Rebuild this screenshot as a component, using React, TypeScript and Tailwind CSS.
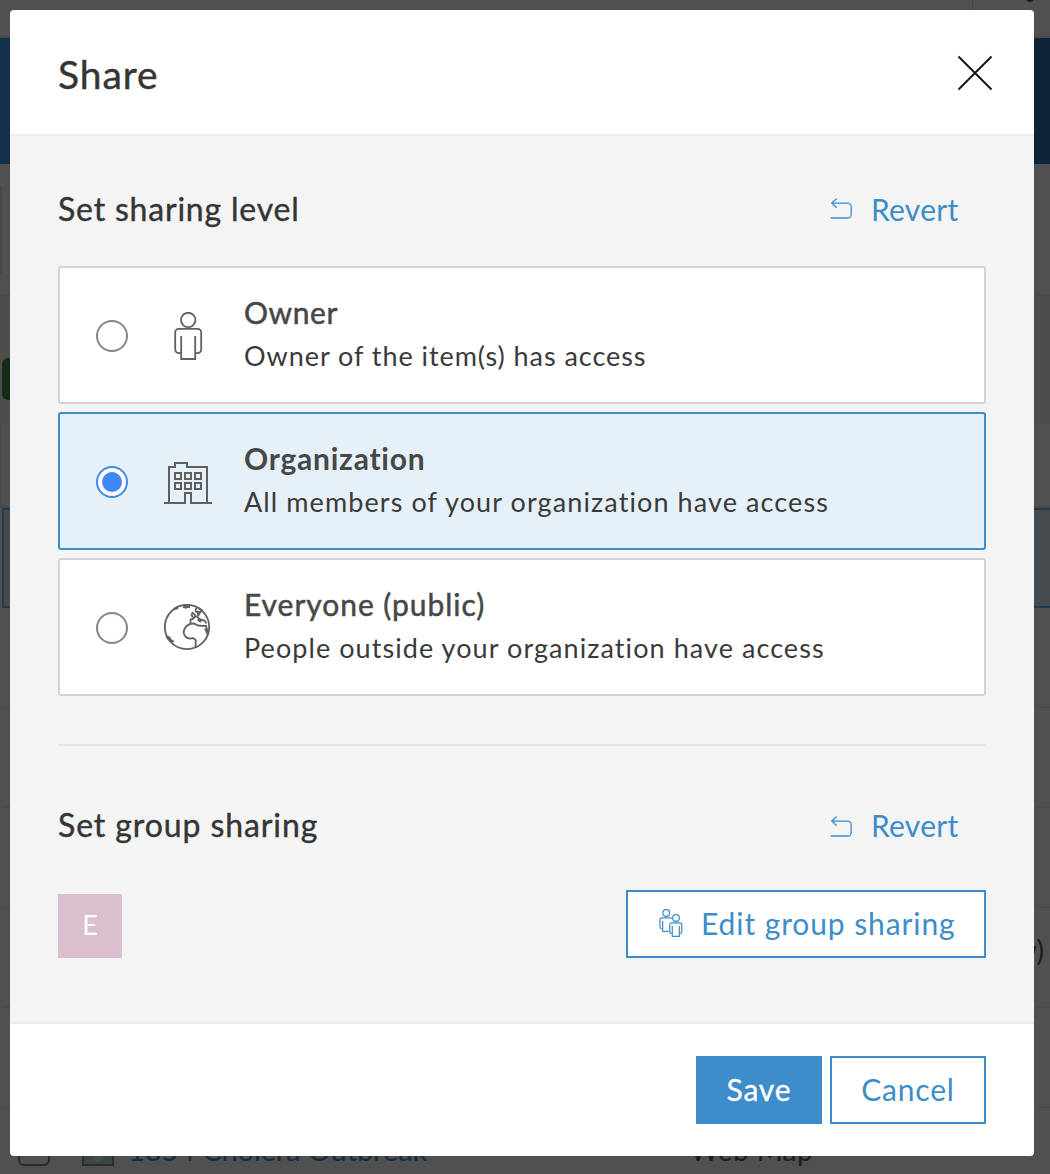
import React from "react";

const rowLabels = ["a", "b", "c", "d", "e"];

function Backdrop() {
  return (
    <div aria-hidden className="absolute inset-0 flex flex-col overflow-hidden bg-[#505050]">
      <div className="flex h-[38px] shrink-0 justify-end border-b-2 border-[#494949]">
        <div className="flex h-full w-[78px] justify-center border-l border-[#454545] pl-9">
          <div className="-mt-1.5 h-2 w-2 rounded-full bg-[#1a1a1a]" />
        </div>
      </div>
      <div className="h-[126px] shrink-0 bg-linear-to-r from-[#12304a] to-[#0c2338]" />
      <div className="flex h-[132px] shrink-0 items-start border-b-2 border-[#4a4a4a] pt-[22px]">
        <div className="h-[88px] w-0.5 bg-[#474747]" />
      </div>
      <div className="h-[128px] shrink-0 bg-[#4d4d4d] pt-[62px] pl-0.5">
        <div className="h-[42px] w-24 rounded-md bg-[#172a16]" />
      </div>
      <div className="h-[84px] shrink-0 border-b-2 border-l-2 border-[#4a4a4a]" />
      <div className="ml-0.5 h-[100px] shrink-0 border-2 border-r-0 border-[#203a50] bg-[#454a4f]" />
      {rowLabels.map((id) => (
        <div
          key={id}
          className="ml-0.5 flex h-[100px] shrink-0 items-center justify-end border-b-2 border-[#4b4b4b] pr-1.5 pb-3.5 text-[28px] text-[#1c1c1c]"
        >
          {id === "d" && <span>(view)</span>}
        </div>
      ))}
      <div className="flex h-[66px] shrink-0 items-start pt-[26px] pl-[18px] leading-8">
        <div className="h-8 w-8 shrink-0 rounded-md border-2 border-[#2a2a2a]" />
        <div className="ml-8 h-8 w-8 shrink-0 border-2 border-[#2c2c2c] bg-[#3c463c]">
          <div className="mx-auto mt-4 h-2.5 w-2.5 rounded-full bg-[#434d54]" />
        </div>
        <span className="ml-3.5 w-[562px] text-[29px] tracking-[-0.100px] text-[#142c42]">1854 Cholera Outbreak</span>
        <span className="text-[28px] tracking-[0.400px] text-[#1c1c1c]">Web Map</span>
      </div>
    </div>
  );
}

function PersonIcon() {
  return (
    <svg width="48" height="48" viewBox="0 0 48 48" fill="none" stroke="#606060" strokeWidth="1.8">
      <circle cx="24.200" cy="8" r="7.200" />
      <path d="M17 41.200h-2.200a3.600 3.600 0 0 1-3.600-3.600V20.500a3.600 3.600 0 0 1 3.600-3.600h18.800a3.600 3.600 0 0 1 3.600 3.600v17.100a3.600 3.600 0 0 1-3.600 3.600H31.400" />
      <path d="M17.200 24v23h14V24" />
    </svg>
  );
}

function BuildingIcon() {
  return (
    <svg width="48" height="48" viewBox="0 0 48 48" fill="none" stroke="#606060" strokeWidth="2">
      <path d="M0 45h21V35h6v10h21M5 45V9h6V5h12v4h20v36" />
      <path d="M11 15h6v6h-6zM21 15h6v6h-6zM31 15h6v6h-6zM11 25h6v6h-6zM21 25h6v6h-6zM31 25h6v6h-6z" />
    </svg>
  );
}

function GlobeIcon() {
  return (
    <svg width="48" height="48" viewBox="0 0 48 48" fill="none" stroke="#606060" strokeWidth="1.8" strokeLinejoin="round">
      <circle cx="23" cy="23" r="22.200" />
      <path d="M31.500 43.500l.3-6.500c-.3-2-1.300-2.500-3-2.800-3.500.8-6.500-.2-7.800-2.200-1.800-2.500-1.500-5.500 0-8 1.500-2.300 4-4.200 7.500-4.500 3.500-.3 3 1.800 5.500 1.800 2.500 1 6 .2 9 .7" />
      <path d="M26.500 19v-3.500c3 .3 3.500-1.500 5-3.300 1.500.2 2.200 1.500 3.800 2.300l2.200 1.500 3 .5 2 3M33.500 15.500l3.500 2.500M29 13.500l-1.500-2.500 1-2.200 2.300 1.800.2 2M34.500 11.500l-1-3-2-1.200.7-3.300M33 7.500l3.500.8 1.500-2.300-3.500-1.800M36 9.500l-2.500 2.500" />
      <path d="M42 22l2 6.500M41 24.500l2.500 6M2 32.500l3.500.8 1 2.500 3.300 2M4 34.500l3 1.500M10 5l3.500-1M19.500 2l2 1.800 3.500-1.500" />
      <path d="M3 33l5 5M19 2.800h7M11 4.800l3-1.500" strokeWidth="2.600" />
    </svg>
  );
}

function RevertIcon() {
  return (
    <svg width="24" height="24" viewBox="0 0 24 24" fill="none" stroke="#3c8dc9" strokeWidth="1.300">
      <path d="M6.700 1.500L1.700 6l5 4.700M2 6.200H17.700a3.500 3.500 0 0 1 3.500 3.500V17.500a3.500 3.500 0 0 1-3.500 3.500H.700" />
    </svg>
  );
}

function GroupIcon() {
  return (
    <svg width="24" height="28" viewBox="0 0 24 28" fill="none" stroke="#3c8dc9" strokeWidth="1.200">
      <circle cx="7.200" cy="4" r="3.400" />
      <path d="M3.500 20H2.800A2 2 0 0 1 1 18v-7.200a2 2 0 0 1 2-2h8.200c1 0 1.500.6 1.500 1.300M3.700 12v10.300h6.100" />
      <circle cx="17" cy="9" r="3.400" />
      <path d="M13.300 24.500h-.8a1.700 1.700 0 0 1-1.700-1.700v-7a2 2 0 0 1 2-2h8a2 2 0 0 1 2 2v7a1.700 1.700 0 0 1-1.700 1.700h-.8M13.300 17v10.400h7V17" />
    </svg>
  );
}

function SectionTitle({ children, spacing, iconClass }: { children: string; spacing: string; iconClass: string }) {
  return (
    <div className="flex h-10 items-center justify-between">
      <h2 className={"text-[32px] leading-10 text-[#353535] [-webkit-text-stroke:0.4px_#353535] " + spacing}>{children}</h2>
      <button className="flex w-[156px] items-center text-[30px] leading-10 tracking-[0.250px] text-[#3c8dc9]">
        <span className={iconClass}>
          <RevertIcon />
        </span>
        <span className="ml-[17px]">Revert</span>
      </button>
    </div>
  );
}

interface OptionProps {
  title: string;
  text: string;
  icon: React.ReactNode;
  selected?: boolean;
  titleClass: string;
  textClass: string;
}

function Option({ title, text, icon, selected, titleClass, textClass }: OptionProps) {
  return (
    <label
      className={
        "flex h-[138px] items-center rounded-[3px] border-2 pl-9 " +
        (selected ? "border-[#3c8dc9] bg-[#e6f0f9]" : "border-[#d3d3d3] bg-white")
      }
    >
      <span
        className={
          "mt-0.5 flex h-8 w-8 shrink-0 items-center justify-center rounded-full bg-white " +
          (selected ? "border-2 border-[#3f86f7]" : "border-2 border-[#858585]")
        }
      >
        {selected && <span className="h-5 w-5 rounded-full bg-[#3f86f7]" />}
      </span>
      <span className="mt-0.5 ml-9 shrink-0">{icon}</span>
      <span className="mb-0.5 ml-8 flex flex-col whitespace-nowrap">
        <span className={"text-[30px] leading-[43px] text-[#474747] " + titleClass}>{title}</span>
        <span className={"text-[27px] leading-[43px] text-[#3a3a3a] " + textClass}>{text}</span>
      </span>
    </label>
  );
}

export default function App() {
  return (
    <div className="relative h-[1174px] w-[1050px] overflow-hidden font-['Lato','Open_Sans',sans-serif]">
      <Backdrop />
      <div className="relative mt-2.5 ml-2.5 flex h-[1146px] w-[1024px] flex-col overflow-hidden rounded-[4px] bg-white">
        <header className="flex h-[126px] shrink-0 items-center justify-between border-b-2 border-[#ebebeb] pr-[41px] pl-12">
          <h1 className="mt-1 text-[39px] leading-[48px] tracking-[0.900px] text-[#353535] [-webkit-text-stroke:0.4px_#353535]">Share</h1>
          <svg className="mt-0.5" width="36" height="36" viewBox="0 0 36 36" stroke="#151515" strokeWidth="2">
            <path d="M1.500 1.500l33 33M34.500 1.500l-33 33" />
          </svg>
        </header>
        <main className="flex h-[886px] shrink-0 flex-col bg-[#f4f4f4] px-12 pt-[53px]">
          <SectionTitle spacing="tracking-[0.800px]" iconClass="">Set sharing level</SectionTitle>
          <div className="mt-[37px] flex flex-col gap-2">
            <Option title="Owner" text="Owner of the item(s) has access" icon={<PersonIcon />} titleClass="tracking-[0.600px] [-webkit-text-stroke:0.5px_#474747]" textClass="tracking-[0.950px]" />
            <Option title="Organization" text="All members of your organization have access" icon={<BuildingIcon />} selected titleClass="font-bold tracking-[0.750px]" textClass="tracking-[1.100px]" />
            <Option title="Everyone (public)" text="People outside your organization have access" icon={<GlobeIcon />} titleClass="tracking-[0.950px] [-webkit-text-stroke:0.5px_#474747]" textClass="tracking-[1.070px]" />
          </div>
          <div className="mt-12 mb-[59px] h-0.5 shrink-0 bg-[#e5e5e5]" />
          <SectionTitle spacing="tracking-[0.900px]" iconClass="mt-1">Set group sharing</SectionTitle>
          <div className="mt-[45px] flex items-end justify-between">
            <div className="flex h-16 w-16 items-center justify-center bg-[#dabfce] pb-0.5 text-[27px] text-white">E</div>
            <button className="flex h-[68px] w-[360px] items-center border-2 border-[#3c8dc9] bg-white pb-0.5 pl-[31px] text-[30px] tracking-[0.900px] text-[#3c8dc9]">
              <GroupIcon />
              <span className="ml-[18px]">Edit group sharing</span>
            </button>
          </div>
        </main>
        <footer className="flex flex-1 items-start justify-end gap-2 border-t-2 border-[#ebebeb] pt-8 pr-12">
          <button className="h-[68px] w-[126px] bg-[#3c8dc9] pb-0.5 text-[30px] tracking-[0.800px] text-white [-webkit-text-stroke:0.3px_white]">Save</button>
          <button className="h-[68px] w-[156px] border-2 border-[#3c8dc9] bg-white pb-0.5 text-[30px] tracking-[0.800px] text-[#3c8dc9]">Cancel</button>
        </footer>
      </div>
    </div>
  );
}
